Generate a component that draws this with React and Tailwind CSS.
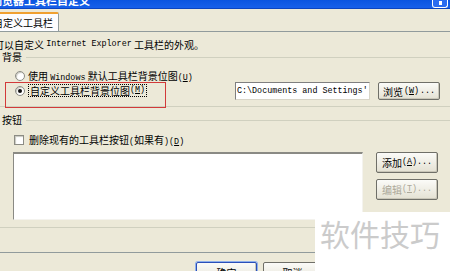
import React from "react";

const CJK = "font-['Noto_Sans_CJK_SC',sans-serif]";
const MONO = "font-['Liberation_Mono',monospace] text-[8.4px]";

function M({ children }) {
  return <span className={MONO}>{children}</span>;
}

function Key({ k }) {
  return (
    <span className={MONO}>
      (<u>{k}</u>)
    </span>
  );
}

function Radio({ checked }) {
  return (
    <span className="w-[10px] h-[10px] rounded-full border border-[#8c8c84] bg-white flex items-center justify-center shrink-0 shadow-[inset_1px_1px_1px_#c8c8c0]">
      {checked && <span className="w-[4px] h-[4px] rounded-full bg-[#111]" />}
    </span>
  );
}

function Button({ children, disabled, primary, className = "" }) {
  return (
    <div
      className={
        "flex items-center justify-center rounded-[2px] border bg-gradient-to-b from-[#fbfbf8] to-[#e4e1d3] shadow-[inset_-1px_-1px_0_#c9c6b8] " +
        (primary ? "border-[#2a4fb8] ring-1 ring-[#8fb0ec] " : "border-[#6f6f68] ") +
        (disabled ? "text-[#aca899] " : "text-black ") +
        className
      }
    >
      {children}
    </div>
  );
}

function GroupLine({ label }) {
  return (
    <div className="flex items-center h-[12px]">
      <span className="pl-[2px] pr-[4px] leading-none">{label}</span>
      <div className="flex-1 h-px bg-[#d0d0bf]" />
    </div>
  );
}

export default function App() {
  return (
    <div className={`relative w-[450px] h-[271px] overflow-hidden bg-[#ece9d8] text-[10px] text-black ${CJK}`}>
      {/* title bar */}
      <div className="h-[9px] overflow-hidden flex items-end bg-gradient-to-b from-[#0a55e0] to-[#1760ea] border-b border-[#0b45c0]">
        <span className="ml-[-9px] mb-[2px] text-[11px] leading-[12px] font-bold text-white whitespace-nowrap">
          浏览器工具栏自定义
        </span>
        <div className="ml-auto mr-[2px] w-[16px] h-[8px] rounded-b-[3px] border border-t-0 border-white bg-[#2a6cf0] flex justify-center">
          <span className="w-[3px] h-[4px] bg-white mt-[1px]" />
        </div>
      </div>

      {/* tabs */}
      <div className="h-[22px] flex items-end">
        <div className="ml-[-14px] h-[19px] pl-[6px] pr-[5px] flex items-center bg-[#fcfcfe] border-x border-[#919b9c] border-t-[2px] border-t-[#f0a030] rounded-t-[2px] whitespace-nowrap">
          自定义工具栏
        </div>
      </div>

      {/* tab panel */}
      <div className="h-[222px] border-t border-b border-[#919b9c] flex flex-col">
        <div className="mt-[6px] h-[12px] flex items-center ml-[-6px] whitespace-nowrap">
          可以自定义&nbsp;<M>Internet Explorer</M>&nbsp;工具栏的外观。
        </div>

        <div className="mt-[1px]">
          <GroupLine label="背景" />
        </div>

        <div className="mt-[7px] h-[12px] flex items-center gap-[3px] pl-[15px] whitespace-nowrap">
          <Radio />
          <span>
            使用&nbsp;<M>Windows</M>&nbsp;默认工具栏背景位图<Key k="U" />
          </span>
        </div>

        <div className="h-[18px] flex items-start whitespace-nowrap">
          <div className="w-[235px] flex items-center gap-[3px] pl-[15px] mt-[2px]">
            <Radio checked />
            <span className="h-[13px] flex items-center px-[1px] border border-dotted border-black">
              自定义工具栏背景位图<Key k="M" />
            </span>
          </div>
          <div className="w-[135px] h-[18px] bg-white border border-[#7f7f7f] border-r-[#d8d5c8] border-b-[#d8d5c8] flex items-center pl-[1px] overflow-hidden">
            <M>C:\Documents and Settings'</M>
          </div>
          <Button className="ml-[8px] w-[62px] h-[18px] gap-[1px]">
            浏览<Key k="W" />
            <M>...</M>
          </Button>
        </div>

        <div className="mt-[6px] h-px bg-[#d0d0bf]" />

        <div className="mt-[7px]">
          <GroupLine label="按钮" />
        </div>

        <div className="mt-[8px] h-[12px] flex items-center gap-[5px] pl-[14px] whitespace-nowrap">
          <span className="w-[10px] h-[10px] bg-white border border-[#8c8c84] shadow-[inset_1px_1px_1px_#c8c8c0] shrink-0" />
          <span>
            删除现有的工具栏按钮<M>(</M>如果有<M>)</M>
            <Key k="D" />
          </span>
        </div>

        <div className="mt-[6px] flex items-start">
          <div className="ml-[13px] w-[350px] h-[68px] bg-white border-t-2 border-l border-[#8a8a84] border-b border-r border-b-[#f4f3ee] border-r-[#f4f3ee]" />
          <div className="ml-[13px] flex flex-col gap-[6px]">
            <Button className="w-[62px] h-[21px]">
              添加<Key k="A" />
              <M>...</M>
            </Button>
            <Button disabled className="w-[62px] h-[21px]">
              编辑<Key k="T" />
              <M>...</M>
            </Button>
          </div>
        </div>

        <div className="mt-[7px] h-px bg-[#d0d0bf]" />
      </div>

      {/* footer */}
      <div className="pt-[9px] flex gap-[6px] pl-[196px]">
        <Button primary className="w-[61px] h-[21px]">
          确定
        </Button>
        <Button className="w-[59px] h-[21px]">取消</Button>
      </div>

      {/* annotation */}
      <div className="absolute left-[5px] top-[82px] w-[161px] h-[26px] border-[1.5px] border-[#d23a3a]" />

      {/* watermark */}
      <div className="absolute left-[315px] top-[212px] w-[135px] h-[59px] bg-white flex items-start">
        <span className="ml-[5px] mt-[4px] text-[30px] leading-[34px] text-[#cbcbcb] whitespace-nowrap">
          软件技巧
        </span>
      </div>
    </div>
  );
}
